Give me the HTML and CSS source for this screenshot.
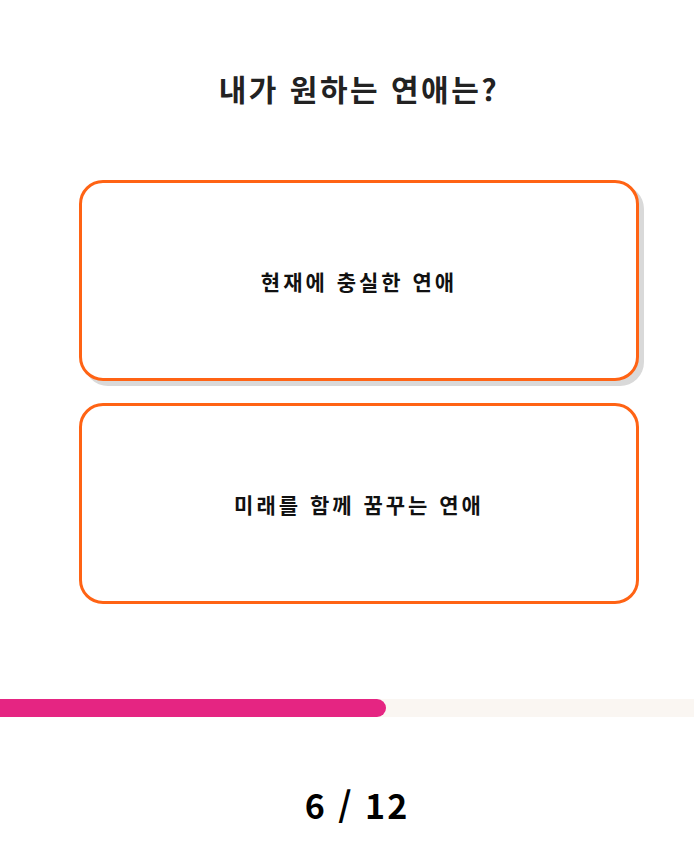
FILE: index.html
```html
<!DOCTYPE html>
<html lang="ko">

<head>
    <meta charset="UTF-8">
    <meta name="viewport" content="width=device-width, initial-scale=1.0">
    <title>연애 유형 테스트</title>
    <link rel="stylesheet" href="styles.css">
</head>

<body>
    <!-- 질문 -->
    <div class="quiz">
        <h1 class="question">내가 원하는 연애는?</h1>
        <div class="answers">
            <button class="answer hover">현재에 충실한 연애</button>
            <button class="answer">미래를 함께 꿈꾸는 연애</button>
        </div>
    </div>

    <!-- 진행 상태 -->
    <div class="progress">
        <div class="progress-bar" style="width: 55.6%;"></div>
    </div>
    <p class="count">6 / 12</p>
</body>

</html>
```

FILE: styles.css
```css
* {
    margin: 0;
    padding: 0;
    box-sizing: border-box;
}

body {
    font-family: "Noto Sans CJK KR", "Noto Sans", sans-serif;
    background: #fff;
    color: #000;
}

.quiz {
    padding: 68px 55px 0 79px;
}

.question {
    text-align: center;
    font-size: 30px;
    font-weight: bold;
    letter-spacing: 2.5px;
    color: #222;
    line-height: 40px;
}

.answers {
    display: flex;
    flex-direction: column;
    gap: 22px;
    margin-top: 72px;
}

.answer {
    height: 201px;
    width: 100%;
    background: #fff;
    border: 3px solid #ff6314;
    border-radius: 24px;
    font-family: inherit;
    font-size: 21px;
    font-weight: bold;
    letter-spacing: 3px;
    color: #111;
    cursor: pointer;
}

.answer.hover,
.answer:hover {
    box-shadow: 5px 5px 0 #d9d9d9;
}

.progress {
    margin-top: 95px;
    height: 18px;
    background: #faf6f2;
}

.progress-bar {
    height: 100%;
    background: #e52582;
    border-radius: 0 9px 9px 0;
}

.count {
    margin-top: 63px;
    text-align: center;
    font-size: 34px;
    font-weight: bold;
    letter-spacing: 2px;
    padding-left: 20px;
}
```
